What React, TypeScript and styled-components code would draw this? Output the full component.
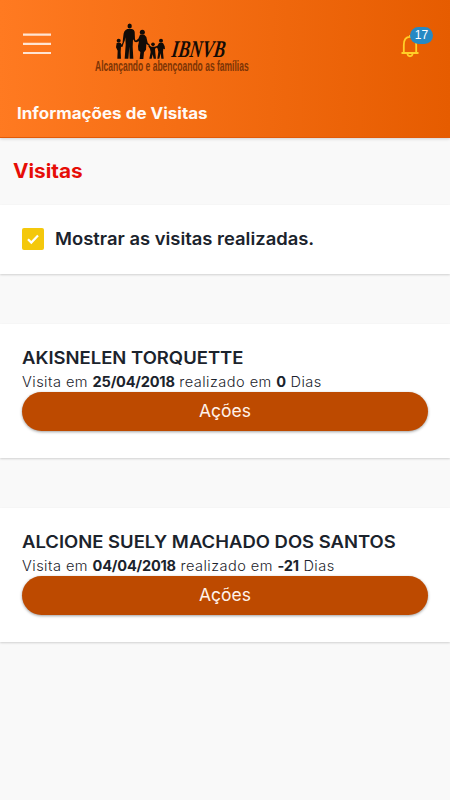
import React from "react";
import styled, { createGlobalStyle } from "styled-components";

const GlobalStyle = createGlobalStyle`
  * { box-sizing: border-box; }
  body {
    margin: 0;
    background: #f9f9f9;
    color: #1b232c;
    font-family: Inter, "Open Sans", sans-serif;
  }
`;

const Page = styled.div`
  min-height: 800px;
  background: #f9f9f9;
`;

const Header = styled.header`
  height: 138px;
  background: linear-gradient(91deg, #ff7a21 0%, #e65c00 100%);
  border-bottom: 1px solid #e25a08;
  box-shadow: 0 1px 3px rgba(0, 0, 0, 0.16);
`;

const Toolbar = styled.div`
  height: 100px;
  display: flex;
  align-items: flex-start;
`;

const MenuButton = styled.button`
  width: 28px;
  height: 21px;
  margin: 33px 0 0 23px;
  padding: 0;
  border: 0;
  background: none;
`;

const MenuIcon = styled.svg`
  display: block;
`;

const Logo = styled.svg`
  margin: 18px 0 0 39px;
  width: 165px;
  height: 60px;
  overflow: visible;
`;

const BellButton = styled.button`
  position: relative;
  width: 36px;
  height: 34px;
  margin: 26px 0 0 145px;
  padding: 0;
  border: 0;
  background: none;
`;

const BellIcon = styled.svg`
  display: block;
`;

const Badge = styled.span`
  position: absolute;
  left: 10px;
  top: 1px;
  width: 23px;
  height: 17px;
  border-radius: 9px;
  background: #2689c4;
  color: #fff;
  font-size: 12px;
  line-height: 17px;
  text-align: center;
`;

const Wide = styled.span<{ $scale: number }>`
  display: inline-block;
  transform: scaleX(${(p) => p.$scale});
  transform-origin: left center;
  white-space: nowrap;
`;

const PageTitle = styled.h1`
  margin: 0;
  padding-left: 17px;
  font-size: 16px;
  line-height: 26px;
  font-weight: 700;
  color: #fffaf6;
`;

const SectionTitle = styled.h2`
  height: 67px;
  margin: 0;
  padding: 20px 0 0 13px;
  font-size: 20px;
  line-height: 26px;
  font-weight: 700;
  color: #e60d07;
`;

const Panel = styled.section`
  background: #fff;
  box-shadow: 0 1px 2px rgba(0, 0, 0, 0.16);
`;

const FilterPanel = styled(Panel)`
  height: 69px;
  padding: 0 0 1px 22px;
  display: flex;
  align-items: center;
  gap: 11px;
`;

const CheckBox = styled.span`
  width: 22px;
  height: 22px;
  border-radius: 2px;
  background: #f4c80c;
  display: grid;
  place-items: center;
`;

const FilterLabel = styled.span`
  margin-top: -1px;
  font-size: 17px;
  font-weight: 600;
`;

const VisitPanel = styled(Panel)`
  height: 134px;
  margin-top: 50px;
  padding: 22px 22px 0;
`;

const VisitName = styled.h3`
  margin: 0;
  font-size: 17px;
  line-height: 24px;
  font-weight: 600;
`;

const VisitInfo = styled.p`
  margin: 0;
  height: 22.4px;
  font-size: 14px;
  line-height: 23px;
  font-weight: 300;
  letter-spacing: 0.45px;

  strong {
    font-weight: 700;
    letter-spacing: -0.2px;
  }
`;

const ActionButton = styled.button`
  display: block;
  width: 100%;
  height: 39px;
  padding: 0 0 2px;
  border: 0;
  border-radius: 20px;
  background: #bd4a00;
  box-shadow: 0 1px 3px rgba(0, 0, 0, 0.38);
  color: #fff2ea;
  font-family: inherit;
  font-size: 17.5px;
  line-height: 37px;
`;

const visits = [
  { name: "AKISNELEN TORQUETTE", date: "25/04/2018", days: "0" },
  { name: "ALCIONE SUELY MACHADO DOS SANTOS", date: "04/04/2018", days: "-21" },
];

function FamilyLogo() {
  return (
    <Logo viewBox="0 0 495 180" role="img" aria-label="IBNVB">
      <g fill="#100b08">
        <circle cx="86" cy="68" r="6" />
        <path d="M80 75h12l3 5 5-12 3 2-6 17-4-1-1 17 1 19h-11l1-24-5-10z" />
        <ellipse cx="119" cy="24" rx="6.5" ry="7.5" />
        <path d="M112 33h14q7 2 8 8l1 23 4 7-4 1-6-8-1 22 2 36h-11l-1-36-3 36h-11l3-42-1-22-2 11-4 4-2-2 2-18q1-16 12-20z" />
        <circle cx="157" cy="43" r="7.5" />
        <path d="M150 50h13l6 7 4 17 7 7-2 3-9-6-1 17-6 8-2 20h-11l2-21-6-5-1-13 3-14-8 3-6-2 4-3 8-6z" />
        <circle cx="189" cy="79" r="5.5" />
        <path d="M184 86h10l9-3 1 3-9 6 1 12 2 18h-7l-3-13-3 13h-7l4-20-2-10-5-7 2-3z" />
        <circle cx="213" cy="68" r="6" />
        <path d="M207 75h12l5 10 1 9-5-2-1 10 2 20h-7l-2-16-4 16h-6l3-21-2-9-3-4z" />
      </g>
      <text
        transform="translate(243 118) skewX(-8)"
        textLength="160"
        lengthAdjust="spacingAndGlyphs"
        fontFamily="Liberation Serif, serif"
        fontStyle="italic"
        fontWeight="700"
        fontSize="72"
        fill="#140b05"
      >IBNVB</text>
      <text
        x="15"
        y="158"
        textLength="461"
        lengthAdjust="spacingAndGlyphs"
        fontFamily="Liberation Sans, sans-serif"
        fontWeight="700"
        fontSize="44"
        fill="#7c3405"
      >Alcançando e abençoando as famílias</text>
    </Logo>
  );
}

export default function App() {
  return (
    <Page>
      <GlobalStyle />
      <Header>
        <Toolbar>
          <MenuButton aria-label="Menu">
            <MenuIcon width="28" height="22" viewBox="0 0 28 22" stroke="#ffe4d3" strokeWidth="2.2">
              <path d="M0 1.6h28M0 10.8h28M0 20h28" />
            </MenuIcon>
          </MenuButton>
          <FamilyLogo />
          <BellButton aria-label="17">
            <BellIcon width="24" height="34" viewBox="0 0 24 34" fill="none" stroke="#ffd028" strokeWidth="1.8">
              <path d="M3.8 26.7V19c0-5.5 2.4-8.2 6.2-8.2s6.2 2.7 6.2 8.2v7.7M1.5 27h17M7.5 28c.3 3 4.7 3 5 0M10 10.8V9" />
            </BellIcon>
            <Badge>17</Badge>
          </BellButton>
        </Toolbar>
        <PageTitle>
          <Wide $scale={1.062}>Informações de Visitas</Wide>
        </PageTitle>
      </Header>
      <SectionTitle>
        <Wide $scale={1.036}>Visitas</Wide>
      </SectionTitle>
      <FilterPanel>
        <CheckBox role="checkbox" aria-checked="true">
          <svg width="14" height="12" viewBox="0 0 14 12" fill="none" stroke="#fff" strokeWidth="2.2">
            <path d="M2 6.3l3.3 3.3L12 2.6" />
          </svg>
        </CheckBox>
        <FilterLabel>
          <Wide $scale={1.082}>Mostrar as visitas realizadas.</Wide>
        </FilterLabel>
      </FilterPanel>
      {visits.map((v) => (
        <VisitPanel key={v.name}>
          <VisitName>
            <Wide $scale={1.086}>{v.name}</Wide>
          </VisitName>
          <VisitInfo>
            <Wide $scale={1.04}>
              Visita em <strong>{v.date}</strong> realizado em <strong>{v.days}</strong> Dias
            </Wide>
          </VisitInfo>
          <ActionButton>Ações</ActionButton>
        </VisitPanel>
      ))}
    </Page>
  );
}
